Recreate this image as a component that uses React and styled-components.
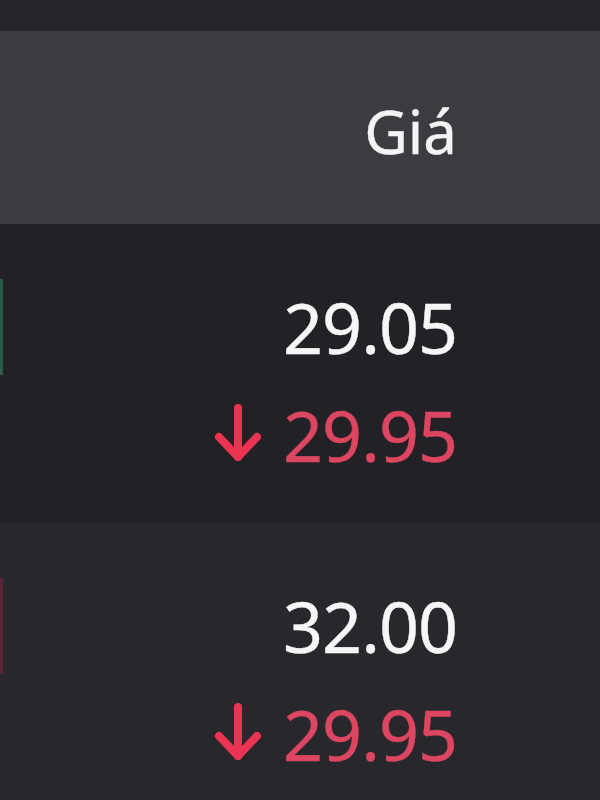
import React from "react";
import styled, { createGlobalStyle } from "styled-components";

const Global = createGlobalStyle`
  html, body { margin: 0; padding: 0; background: #28272c; }
  body { font-family: "Noto Sans", "Open Sans", sans-serif; }
  #root { min-height: 100vh; }
`;

const Page = styled.div`
  display: flex;
  flex-direction: column;
  min-height: 800px;
  background: #28272c;
`;

const TopBand = styled.div`
  height: 31px;
  background: #26252a;
`;

const Header = styled.div`
  height: 193px;
  box-sizing: border-box;
  background: #3c3b3f;
  display: flex;
  justify-content: flex-end;
  align-items: flex-start;
  padding: 70px 143px 0 0;
`;

const HeaderLabel = styled.span`
  font-size: 60px;
  line-height: 1;
  color: #f4f4f5;
  font-weight: 400;
  -webkit-text-stroke: 0.4px #f4f4f5;
`;

const Row = styled.div`
  display: flex;
  align-items: flex-start;
  background: ${(p) => p.$bg};
  min-height: 299px;
  box-sizing: border-box;
  flex: ${(p) => (p.$grow ? 1 : "none")};
`;

const SideBar = styled.div`
  width: 3px;
  height: 96px;
  margin-top: 55px;
  background: ${(p) => p.$color};
  flex: none;
`;

const Cell = styled.div`
  flex: 1;
  display: flex;
  flex-direction: column;
  align-items: flex-end;
  gap: 38px;
  padding: 68px 143px 0 0;
`;

const Price = styled.div`
  font-size: 70px;
  line-height: 1;
  color: #f6f6f7;
  letter-spacing: -1px;
  -webkit-text-stroke: 0.4px #f6f6f7;
`;

const Change = styled.div`
  display: flex;
  align-items: flex-start;
  gap: 20px;
  font-size: 70px;
  line-height: 1;
  color: #dc4661;
  letter-spacing: -1px;
  -webkit-text-stroke: 0.4px #dc4661;
`;

const ArrowIcon = styled.svg`
  width: 50px;
  height: 60px;
  margin-top: 3px;
  flex: none;
`;

const DownArrow = () => (
  <ArrowIcon viewBox="0 0 50 60" fill="none" stroke="#ea3452" strokeWidth="8" strokeLinecap="round" strokeLinejoin="round">
    <line x1="25" y1="5" x2="25" y2="54" />
    <polyline points="6,34 25,54 44,34" />
  </ArrowIcon>
);

const rows = [
  { price: "29.05", change: "29.95", bar: "#2d5a45", bg: "#222125" },
  { price: "32.00", change: "29.95", bar: "#5a2434", bg: "#28272c" },
];

export default function App() {
  return (
    <>
      <Global />
      <Page>
        <TopBand />
        <Header>
          <HeaderLabel>Giá</HeaderLabel>
        </Header>
        {rows.map((r, i) => (
          <Row key={i} $bg={r.bg} $grow={i === rows.length - 1}>
            <SideBar $color={r.bar} />
            <Cell>
              <Price>{r.price}</Price>
              <Change>
                <DownArrow />
                <span>{r.change}</span>
              </Change>
            </Cell>
          </Row>
        ))}
      </Page>
    </>
  );
}
